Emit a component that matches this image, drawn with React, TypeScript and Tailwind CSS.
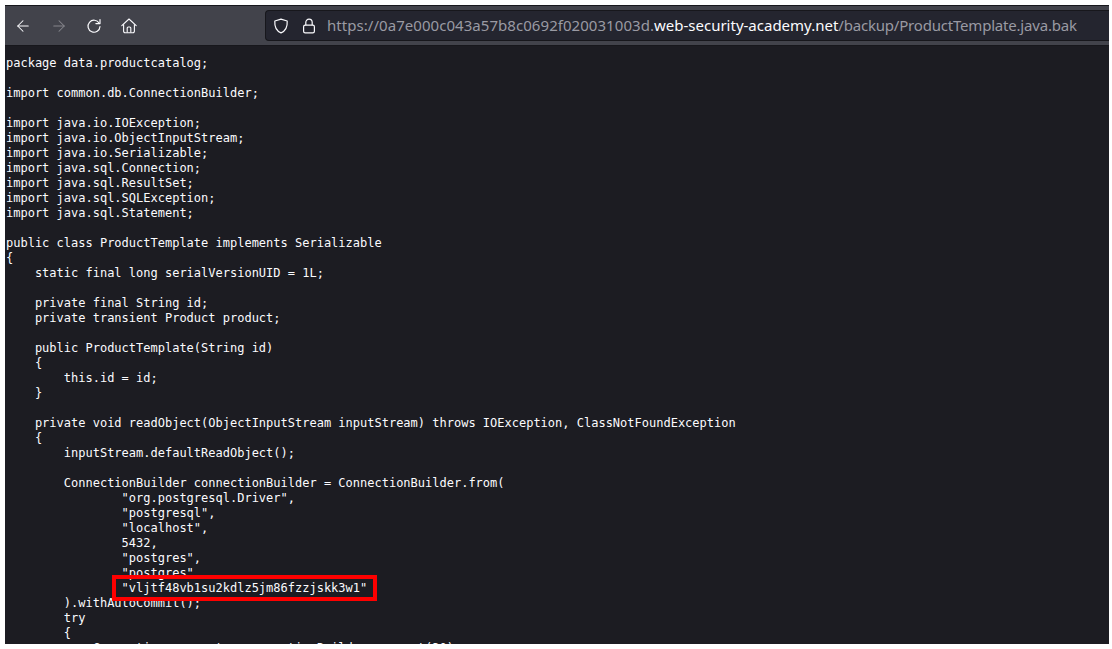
import { ArrowLeft, ArrowRight } from "lucide-react"

const source = `package data.productcatalog;

import common.db.ConnectionBuilder;

import java.io.IOException;
import java.io.ObjectInputStream;
import java.io.Serializable;
import java.sql.Connection;
import java.sql.ResultSet;
import java.sql.SQLException;
import java.sql.Statement;

public class ProductTemplate implements Serializable
{
    static final long serialVersionUID = 1L;

    private final String id;
    private transient Product product;

    public ProductTemplate(String id)
    {
        this.id = id;
    }

    private void readObject(ObjectInputStream inputStream) throws IOException, ClassNotFoundException
    {
        inputStream.defaultReadObject();

        ConnectionBuilder connectionBuilder = ConnectionBuilder.from(
                "org.postgresql.Driver",
                "postgresql",
                "localhost",
                5432,
                "postgres",
                "postgres",
                "vljtf48vb1su2kdlz5jm86fzzjskk3w1"
        ).withAutoCommit();
        try
        {
            Connection connect = connectionBuilder.connect(30);`

/** Firefox toolbar glyphs, lucide has no close match for these. */
function ReloadIcon() {
  return (
    <svg viewBox="0 0 16 16" className="ml-[18px] size-[16px] flex-none" fill="none" stroke="#fbfbfe" strokeWidth="1.2" strokeLinecap="round">
      <path d="M13.2 5.2A6 6 0 1 0 14 8.5" />
      <path d="M14 1.5V5.6H9.9" strokeLinejoin="round" />
    </svg>
  )
}

function HomeIcon() {
  return (
    <svg viewBox="0 0 16 16" className="ml-[19px] size-[16px] flex-none" fill="none" stroke="#fbfbfe" strokeWidth="1.1" strokeLinejoin="round">
      <path d="M0.8 7.6 8 1l7.2 6.6" strokeLinecap="round" />
      <path d="M2.6 6.2V13.2a1.5 1.5 0 0 0 1.5 1.5h7.8a1.5 1.5 0 0 0 1.5-1.5V6.2" />
      <path d="M6.2 14.6V10a1 1 0 0 1 1-1h1.6a1 1 0 0 1 1 1v4.6" />
    </svg>
  )
}

function ShieldIcon() {
  return (
    <svg viewBox="0 0 16 16" className="size-[16px] flex-none" fill="none" stroke="#fbfbfe" strokeWidth="1.2" strokeLinejoin="round">
      <path d="M8 1.2 14.2 3C14.6 9 12.4 13 8 14.9 3.6 13 1.4 9 1.8 3Z" />
    </svg>
  )
}

function LockIcon() {
  return (
    <svg viewBox="0 0 16 16" className="ml-[12px] size-[16px] flex-none" fill="none" stroke="#fbfbfe" strokeWidth="1.2" strokeLinejoin="round">
      <rect x="2.6" y="7.2" width="10.8" height="7.6" rx="1.6" />
      <path d="M4.8 7.2V4.4a3.2 3.2 0 0 1 6.4 0v2.8" />
    </svg>
  )
}

export default function App() {
  return (
    <div className="h-[649px] w-[1112px] overflow-hidden bg-white pt-[5px] pr-[3px] pb-[5px] pl-[5px]">
      <div className="relative flex h-full flex-col overflow-hidden bg-[#1c1c22]">
        {/* browser toolbar */}
        <div className="flex h-[41px] flex-none items-center border-y border-y-[#17171c] bg-[#42434b] pl-[9px]">
          <ArrowLeft className="size-[18px] flex-none text-[#fbfbfe]" strokeWidth={1.4} />
          <ArrowRight className="ml-[18px] size-[18px] flex-none text-[#85868c]" strokeWidth={1.4} />
          <ReloadIcon />
          <HomeIcon />
          <div className="ml-[128px] flex h-[31px] min-w-0 flex-1 items-center rounded-l-[4px] border border-r-0 border-[#17171c] bg-[#24252f] pl-[7px] font-['Noto_Sans',sans-serif] text-[15px] whitespace-nowrap text-[#9a9aa3]">
            <ShieldIcon />
            <LockIcon />
            <span className="ml-[10px]">
              <span className="tracking-[0.05px]">https://0a7e000c043a57b8c0692f020031003d.</span>
              <span className="text-[#fbfbfe]">web-security-academy.net</span>
              <span className="tracking-[-0.2px]">/backup/ProductTemplate.java.bak</span>
            </span>
          </div>
        </div>

        {/* document */}
        <pre className="m-0 flex-1 overflow-hidden pt-[10px] pl-px font-['DejaVu_Sans_Mono',monospace] text-[12px] leading-[15px] text-[#fbfbfe]">
          {source}
        </pre>

        {/* red annotation */}
        <div className="absolute top-[570px] left-[107px] h-[26px] w-[265px] border-[4px] border-[#fe0000]" />
      </div>
    </div>
  )
}
